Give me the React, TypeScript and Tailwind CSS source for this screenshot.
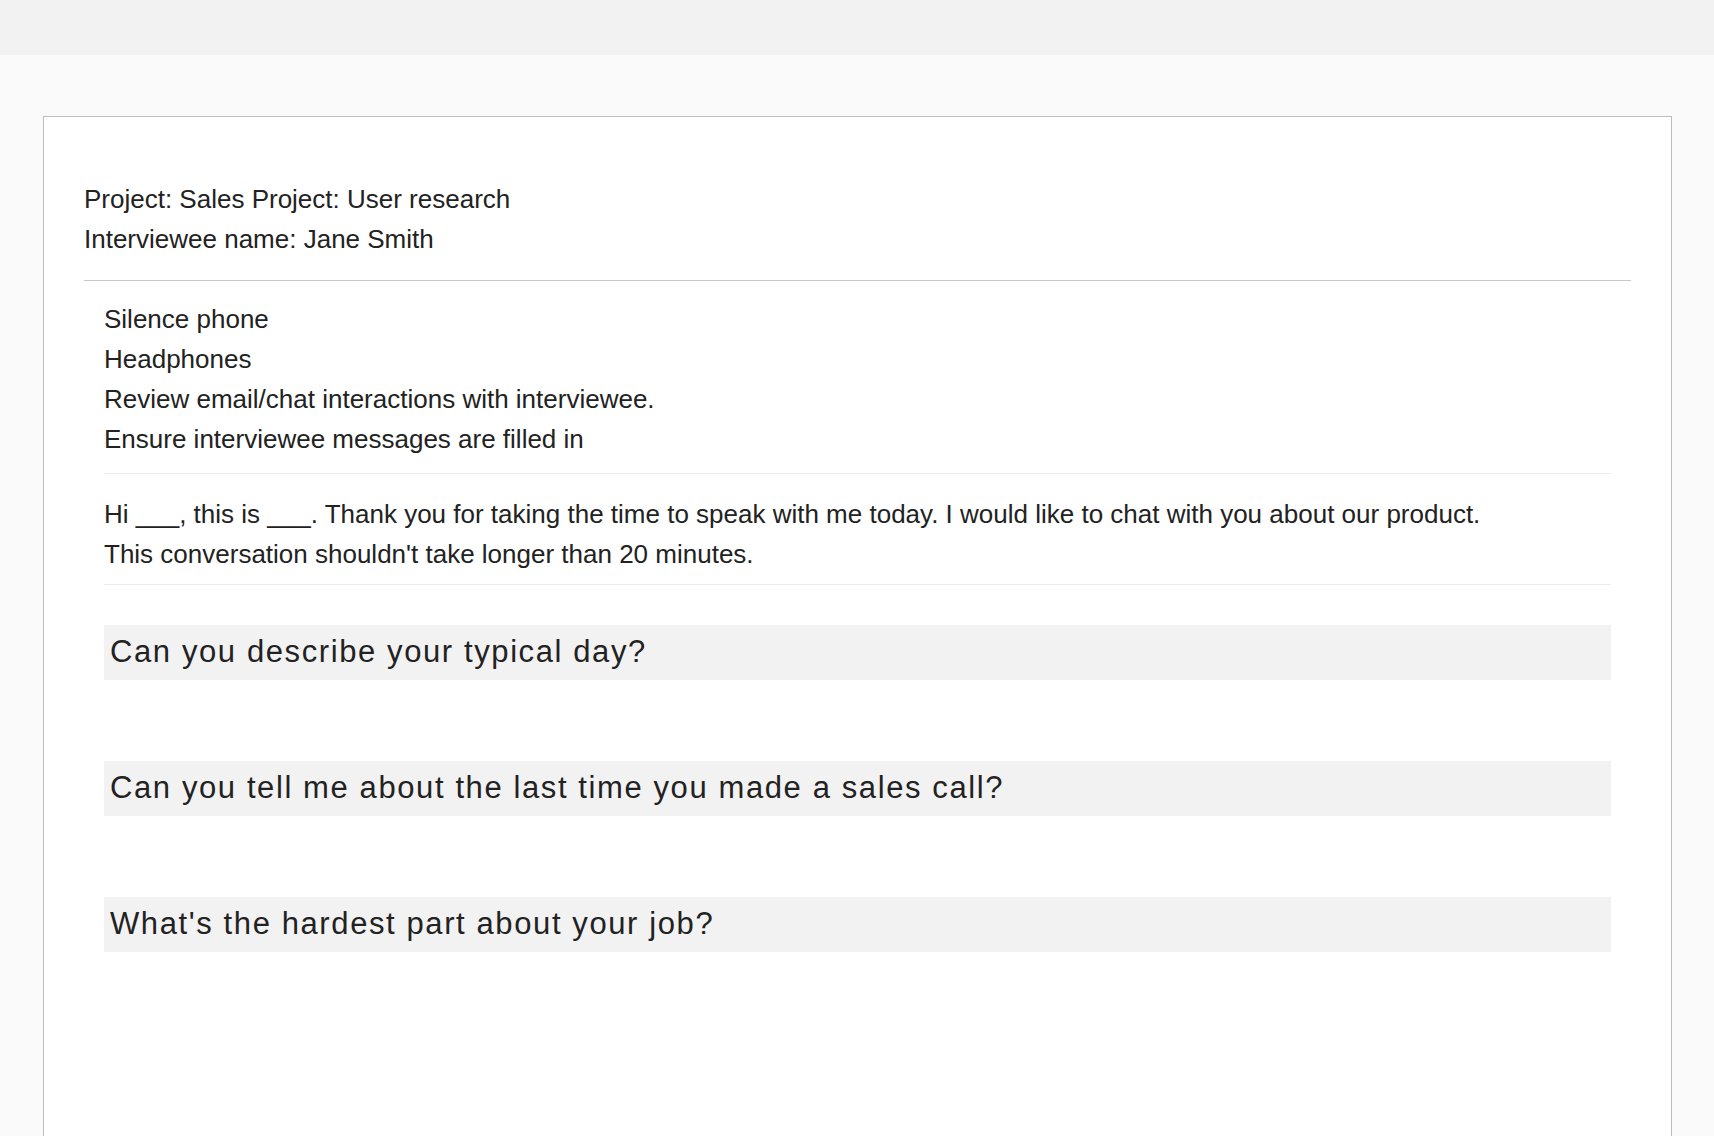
import React from 'react';

const checklist = [
    'Silence phone',
    'Headphones',
    'Review email/chat interactions with interviewee.',
    'Ensure interviewee messages are filled in',
];

const questions = [
    'Can you describe your typical day?',
    'Can you tell me about the last time you made a sales call?',
    "What's the hardest part about your job?",
];

export default function App() {
    return (
        <div className="h-[1136px] bg-[#fafafa] text-[#222] font-[Liberation_Sans,Arial,sans-serif] overflow-hidden">
            <div className="h-[55px] bg-[#f2f2f2]"></div>
            <div className="ml-[43px] mr-[42px] mt-[61px] h-[1100px] bg-white border border-[#bdbdbd] pt-[62px] px-[40px]">
                <div className="text-[26px] leading-[40px]">
                    <div>Project: Sales Project: User research</div>
                    <div>Interviewee name: Jane Smith</div>
                </div>
                <hr className="mt-[21px] border-t border-[#c8c8c8]" />
                <div className="px-[20px]">
                    <div className="pt-[18px] pb-[14px] text-[26px] leading-[40px] border-b border-[#ececec]">
                        {checklist.map((item) => (
                            <div key={item}>{item}</div>
                        ))}
                    </div>
                    <div className="pt-[20px] pb-[10px] text-[26px] leading-[40px] border-b border-[#ececec]">
                        Hi ___, this is ___. Thank you for taking the time to speak with me today. I would like to chat with you about our product.
                        <br />
                        This conversation shouldn't take longer than 20 minutes.
                    </div>
                    <div className="pt-[40px] flex flex-col gap-[81px]">
                        {questions.map((q) => (
                            <div key={q} className="h-[55px] bg-[#f2f2f2] flex items-center px-[6px] text-[31px] tracking-[1.6px] text-[#222]">
                                {q}
                            </div>
                        ))}
                    </div>
                </div>
            </div>
        </div>
    );
}
